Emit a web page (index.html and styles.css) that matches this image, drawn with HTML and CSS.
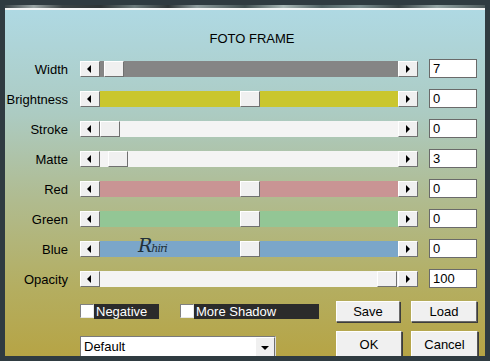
FILE: index.html
```html
<!DOCTYPE html>
<html lang="en">
<head>
  <meta charset="UTF-8" />
  <title>Foto Frame</title>
  <link rel="stylesheet" href="styles.css">
</head>
<body>

<div class="strip"></div>

<div class="dialog">
  <h1 class="title">FOTO FRAME</h1>

  <div class="rows">
    <div class="row">
      <span class="label">Width</span>
      <div class="slider">
        <span class="arrow"><i class="tri-left"></i></span>
        <div class="track gray"><span class="thumb" style="left:4px"></span></div>
        <span class="arrow"><i class="tri-right"></i></span>
      </div>
      <input class="value" value="7">
    </div>
    <div class="row">
      <span class="label">Brightness</span>
      <div class="slider">
        <span class="arrow"><i class="tri-left"></i></span>
        <div class="track yellow"><span class="thumb" style="left:140px"></span></div>
        <span class="arrow"><i class="tri-right"></i></span>
      </div>
      <input class="value" value="0">
    </div>
    <div class="row">
      <span class="label">Stroke</span>
      <div class="slider">
        <span class="arrow"><i class="tri-left"></i></span>
        <div class="track white"><span class="thumb" style="left:0px"></span></div>
        <span class="arrow"><i class="tri-right"></i></span>
      </div>
      <input class="value" value="0">
    </div>
    <div class="row">
      <span class="label">Matte</span>
      <div class="slider">
        <span class="arrow"><i class="tri-left"></i></span>
        <div class="track white"><span class="thumb" style="left:8px"></span></div>
        <span class="arrow"><i class="tri-right"></i></span>
      </div>
      <input class="value" value="3">
    </div>
    <div class="row">
      <span class="label">Red</span>
      <div class="slider">
        <span class="arrow"><i class="tri-left"></i></span>
        <div class="track red"><span class="thumb" style="left:140px"></span></div>
        <span class="arrow"><i class="tri-right"></i></span>
      </div>
      <input class="value" value="0">
    </div>
    <div class="row">
      <span class="label">Green</span>
      <div class="slider">
        <span class="arrow"><i class="tri-left"></i></span>
        <div class="track green"><span class="thumb" style="left:140px"></span></div>
        <span class="arrow"><i class="tri-right"></i></span>
      </div>
      <input class="value" value="0">
    </div>
    <div class="row">
      <span class="label">Blue</span>
      <div class="slider">
        <span class="arrow"><i class="tri-left"></i></span>
        <div class="track blue"><span class="thumb" style="left:140px"></span></div>
        <span class="arrow"><i class="tri-right"></i></span>
      </div>
      <input class="value" value="0">
    </div>
    <div class="row">
      <span class="label">Opacity</span>
      <div class="slider">
        <span class="arrow"><i class="tri-left"></i></span>
        <div class="track white"><span class="thumb" style="left:277px"></span></div>
        <span class="arrow"><i class="tri-right"></i></span>
      </div>
      <input class="value" value="100">
    </div>
  </div>

  <div class="actions">
    <label class="check"><span class="box"></span><span class="check-text">Negative</span></label>
    <label class="check shadow"><span class="box"></span><span class="check-text">More Shadow</span></label>
    <button class="btn save">Save</button>
    <button class="btn load">Load</button>
  </div>

  <div class="actions bottom">
    <div class="select">
      <span class="select-text">Default</span>
      <span class="drop"><i class="tri-down"></i></span>
    </div>
    <button class="btn ok">OK</button>
    <button class="btn cancel">Cancel</button>
  </div>

  <span class="sign">R<small>hiri</small></span>
</div>

</body>
</html>
```

FILE: styles.css
```css
body {
  margin: 0;
  height: 361px;
  overflow: hidden;
  background: #2f3b41;
  font-family: "Liberation Sans", Arial, sans-serif;
  font-size: 13px;
  color: #000;
}

.strip {
  height: 3px;
  margin: 5px 5px 0;
  background: linear-gradient(90deg, #3a4448 0, #9aa5a5 6%, #3b4446 12%, #2d3436 20%, #6d7b7c 27%, #2e3638 34%, #8e9c9d 40%, #415052 50%, #a9b8b6 58%, #506264 66%, #7b8e90 74%, #394446 82%, #94a4a4 90%, #4d5a5c 100%);
}

.dialog {
  position: relative;
  height: 346px;
  margin: 0 5px;
  border-top: 2px solid #f4f6f6;
  overflow: hidden;
  background: linear-gradient(180deg, #afd9e3 0%, #accbc2 30%, #b0bb8f 55%, #b4ae61 80%, #b6a445 100%);
}

.title {
  margin: 21px 0 0;
  padding-left: 14px;
  font-size: 13px;
  font-weight: normal;
  line-height: 16px;
  text-align: center;
}

.rows {
  margin-top: 7px;
}

.row {
  display: flex;
  align-items: center;
  height: 30px;
}

.label {
  width: 63px;
  margin-right: 12px;
  text-align: right;
}

.slider {
  display: flex;
  width: 338px;
  height: 16px;
}

.arrow,
.thumb {
  box-sizing: border-box;
  display: flex;
  align-items: center;
  justify-content: center;
  width: 20px;
  height: 16px;
  background: #f0f0f0;
  border: 1px solid;
  border-color: #fff #707070 #707070 #fff;
}

.tri-left {
  width: 0;
  height: 0;
  border-top: 4px solid transparent;
  border-bottom: 4px solid transparent;
  border-right: 4px solid #000;
  margin-right: 2px;
}

.tri-right {
  width: 0;
  height: 0;
  border-top: 4px solid transparent;
  border-bottom: 4px solid transparent;
  border-left: 4px solid #000;
}

.track {
  position: relative;
  flex: 1;
}

.thumb {
  position: absolute;
  top: 0;
}

.gray { background: #858585; }
.yellow { background: #cac62e; }
.white { background: #f4f4f4; }
.red { background: #c99494; }
.green { background: #93c695; }
.blue { background: #7ba6c9; }

.value {
  box-sizing: border-box;
  width: 48px;
  height: 19px;
  margin: 0 0 1px 11px;
  padding: 0 3px;
  border: 1px solid #6a6a6a;
  background: #fff;
  font-family: "Liberation Sans", Arial, sans-serif;
  font-size: 13px;
}

.actions {
  display: flex;
  align-items: center;
  height: 22px;
  margin-top: 6px;
  padding-left: 75px;
}

.check {
  display: flex;
  align-items: center;
  height: 15px;
}

.box {
  box-sizing: border-box;
  width: 14px;
  height: 14px;
  background: #fff;
  border: 1px solid;
  border-color: #808080 #e8e8e8 #e8e8e8 #808080;
}

.check-text {
  width: 63px;
  height: 15px;
  padding-left: 2px;
  line-height: 15px;
  background: #2b2b2b;
  color: #fff;
}

.shadow {
  margin-left: 21px;
}

.shadow .check-text {
  width: 123px;
}

.btn {
  box-sizing: border-box;
  height: 21px;
  padding: 0;
  background: #f0f0f0;
  border: 1px solid;
  border-color: #fff #6a6a6a #6a6a6a #fff;
  box-shadow: 1px 1px 0 #3c3c3c;
  font-family: "Liberation Sans", Arial, sans-serif;
  font-size: 13px;
  color: #000;
}

.save {
  width: 64px;
  margin-left: 17px;
}

.load {
  width: 66px;
  margin-left: 11px;
}

.bottom {
  align-items: flex-start;
  height: 30px;
  margin-top: 9px;
}

.select {
  box-sizing: border-box;
  display: flex;
  justify-content: space-between;
  width: 196px;
  height: 22px;
  margin-top: 5px;
  background: #fff;
  border: 1px solid;
  border-color: #7a7a7a #dcdcdc #dcdcdc #7a7a7a;
}

.select-text {
  padding: 2px 0 0 3px;
}

.drop {
  box-sizing: border-box;
  display: flex;
  justify-content: center;
  padding-top: 8px;
  width: 20px;
  background: #f0f0f0;
  border: 1px solid;
  border-color: #fff #707070 #707070 #fff;
}

.tri-down {
  width: 0;
  height: 0;
  border-left: 4px solid transparent;
  border-right: 4px solid transparent;
  border-top: 4px solid #000;
}

.ok,
.cancel {
  height: 26px;
  border-color: #fff #555 #555 #fff;
}

.ok {
  width: 66px;
  margin-left: 60px;
}

.cancel {
  width: 67px;
  margin-left: 9px;
}

.sign {
  position: absolute;
  left: 133px;
  top: 224px;
  font-family: "DejaVu Serif", serif;
  font-style: italic;
  font-size: 19px;
  color: #22313a;
  letter-spacing: -1px;
}

.sign small {
  font-size: 11px;
}
```
